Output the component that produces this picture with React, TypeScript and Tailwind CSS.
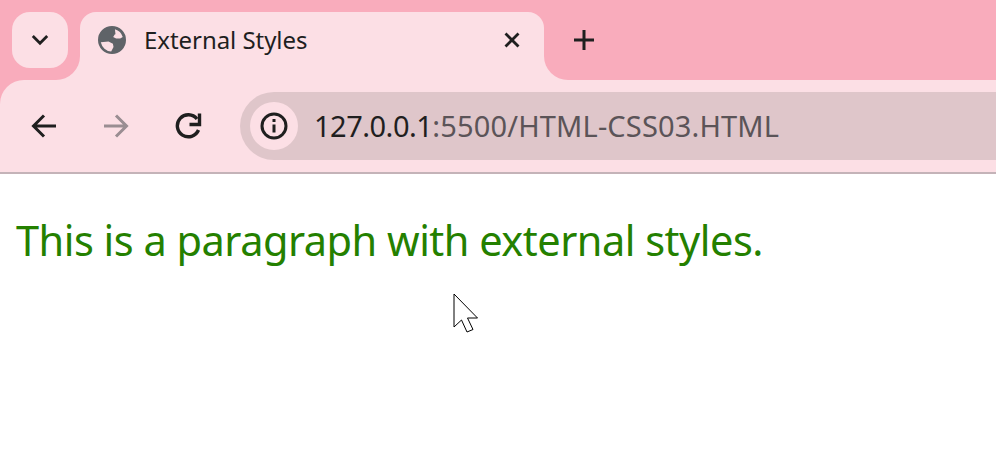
function Globe() {
  return (
    <svg width="28" height="28" viewBox="0 0 24 24" fill="#5f6368">
      <path
        fillRule="evenodd"
        d="M12 0a12 12 0 1 0 0 24 12 12 0 0 0 0-24zM14.500 2.800a10 10 0 0 1 6.700 6.700l-2.200 1.300h-3.500L13 9.500l1.500-2.500h.5zM2.400 14l6.600-.8 3.800 2 .5 2.800-2 3.900A10 10 0 0 1 2.400 14z"
      />
    </svg>
  );
}

function Cursor() {
  return (
    <svg width="26" height="40" viewBox="0 0 26 40" className="absolute left-[453px] top-[293px]">
      <path d="M1 1v33l7.500-7 5.500 12 6-2.500-5.500-11.500H24.500z" fill="#fff" stroke="#000" strokeWidth="1" />
    </svg>
  );
}

export default function App() {
  return (
    <div className="h-[450px] w-[996px] overflow-hidden bg-white relative font-['Noto_Sans',sans-serif]">
      <div className="bg-[#f9acbc]">
        {/* Tab strip */}
        <div className="flex h-20 pl-3 pt-3">
          <div className="relative z-10 flex h-14 w-14 items-center justify-center rounded-[18px] bg-[#fcdfe5]">
            <svg width="20" height="20" viewBox="0 0 20 20" fill="none" stroke="#1f1f1f" strokeWidth="2.800">
              <path d="M2.800 6 10 13.200 17.200 6" />
            </svg>
          </div>
          <div className="relative ml-3 flex h-[68px] w-[464px] items-start rounded-t-2xl bg-[#fcdfe5] pl-[18px] pr-[22px] pt-[14px]">
            <div className="absolute bottom-0 left-[-24px] h-6 w-6 bg-[#fcdfe5]">
              <div className="h-6 w-6 rounded-br-3xl bg-[#f9acbc]" />
            </div>
            <div className="absolute bottom-0 right-[-24px] h-6 w-6 bg-[#fcdfe5]">
              <div className="h-6 w-6 rounded-bl-3xl bg-[#f9acbc]" />
            </div>
            <Globe />
            <span className="ml-[18px] text-[24px] leading-[28px] tracking-[-0.05px] text-[#1f1f1f]">External Styles</span>
            <svg className="ml-auto mt-[4px]" width="20" height="20" viewBox="0 0 20 20" stroke="#1f1f1f" strokeWidth="2.800">
              <path d="M3.500 3.500l13 13M16.500 3.500l-13 13" />
            </svg>
          </div>
          <svg className="ml-[29px] mt-[17px]" width="22" height="22" viewBox="0 0 22 22" stroke="#1f1f1f" strokeWidth="3">
            <path d="M11 1v20M1 11h20" />
          </svg>
        </div>

        {/* Toolbar */}
        <div className="flex h-[94px] items-start rounded-tl-3xl border-b-2 border-[#c4b3b8] bg-[#fcdfe5] pt-3">
          <div className="flex h-[68px] w-[240px] shrink-0 items-center pl-[31px]">
            <svg width="26" height="26" viewBox="0 0 26 26" fill="none" stroke="#1f1f1f" strokeWidth="3">
              <path d="M25 13H3M13 2.500 2.500 13 13 23.500" />
            </svg>
            <svg className="ml-[46px]" width="26" height="26" viewBox="0 0 26 26" fill="none" stroke="#9a8d92" strokeWidth="3">
              <path d="M1 13h22M13 2.500 23.500 13 13 23.500" />
            </svg>
            <svg className="ml-[46px]" width="28" height="28" viewBox="0 0 28 28" fill="none" stroke="#1f1f1f" strokeWidth="3.400">
              <path d="M23.500 18a11 11 0 1 1-1.500-11" />
              <path d="M24.500 1.500v11h-10" />
            </svg>
          </div>
          <div className="flex h-[68px] flex-1 items-center rounded-l-[34px] bg-[#dfc6ca] pl-[10px]">
            <div className="flex h-12 w-12 items-center justify-center rounded-full bg-[#fcdfe5]">
              <svg width="28" height="28" viewBox="0 0 28 28" fill="none" stroke="#1f1f1f" strokeWidth="3">
                <circle cx="14" cy="14" r="12" />
                <path d="M14 12.500v8M14 7v3" />
              </svg>
            </div>
            <span className="ml-[16px] text-[29px] text-[#1f1f1f]">
              <span className="tracking-[-0.5px]">127.0.0.1</span>
              <span className="tracking-[0.15px] text-[#5b5458]">:5500/HTML-CSS03.HTML</span>
            </span>
          </div>
        </div>
      </div>

      <p className="pl-4 pt-[38px] text-[41.5px] leading-[56px] tracking-[-0.5px] text-[#248000]">This is a paragraph with external styles.</p>
      <Cursor />
    </div>
  );
}
